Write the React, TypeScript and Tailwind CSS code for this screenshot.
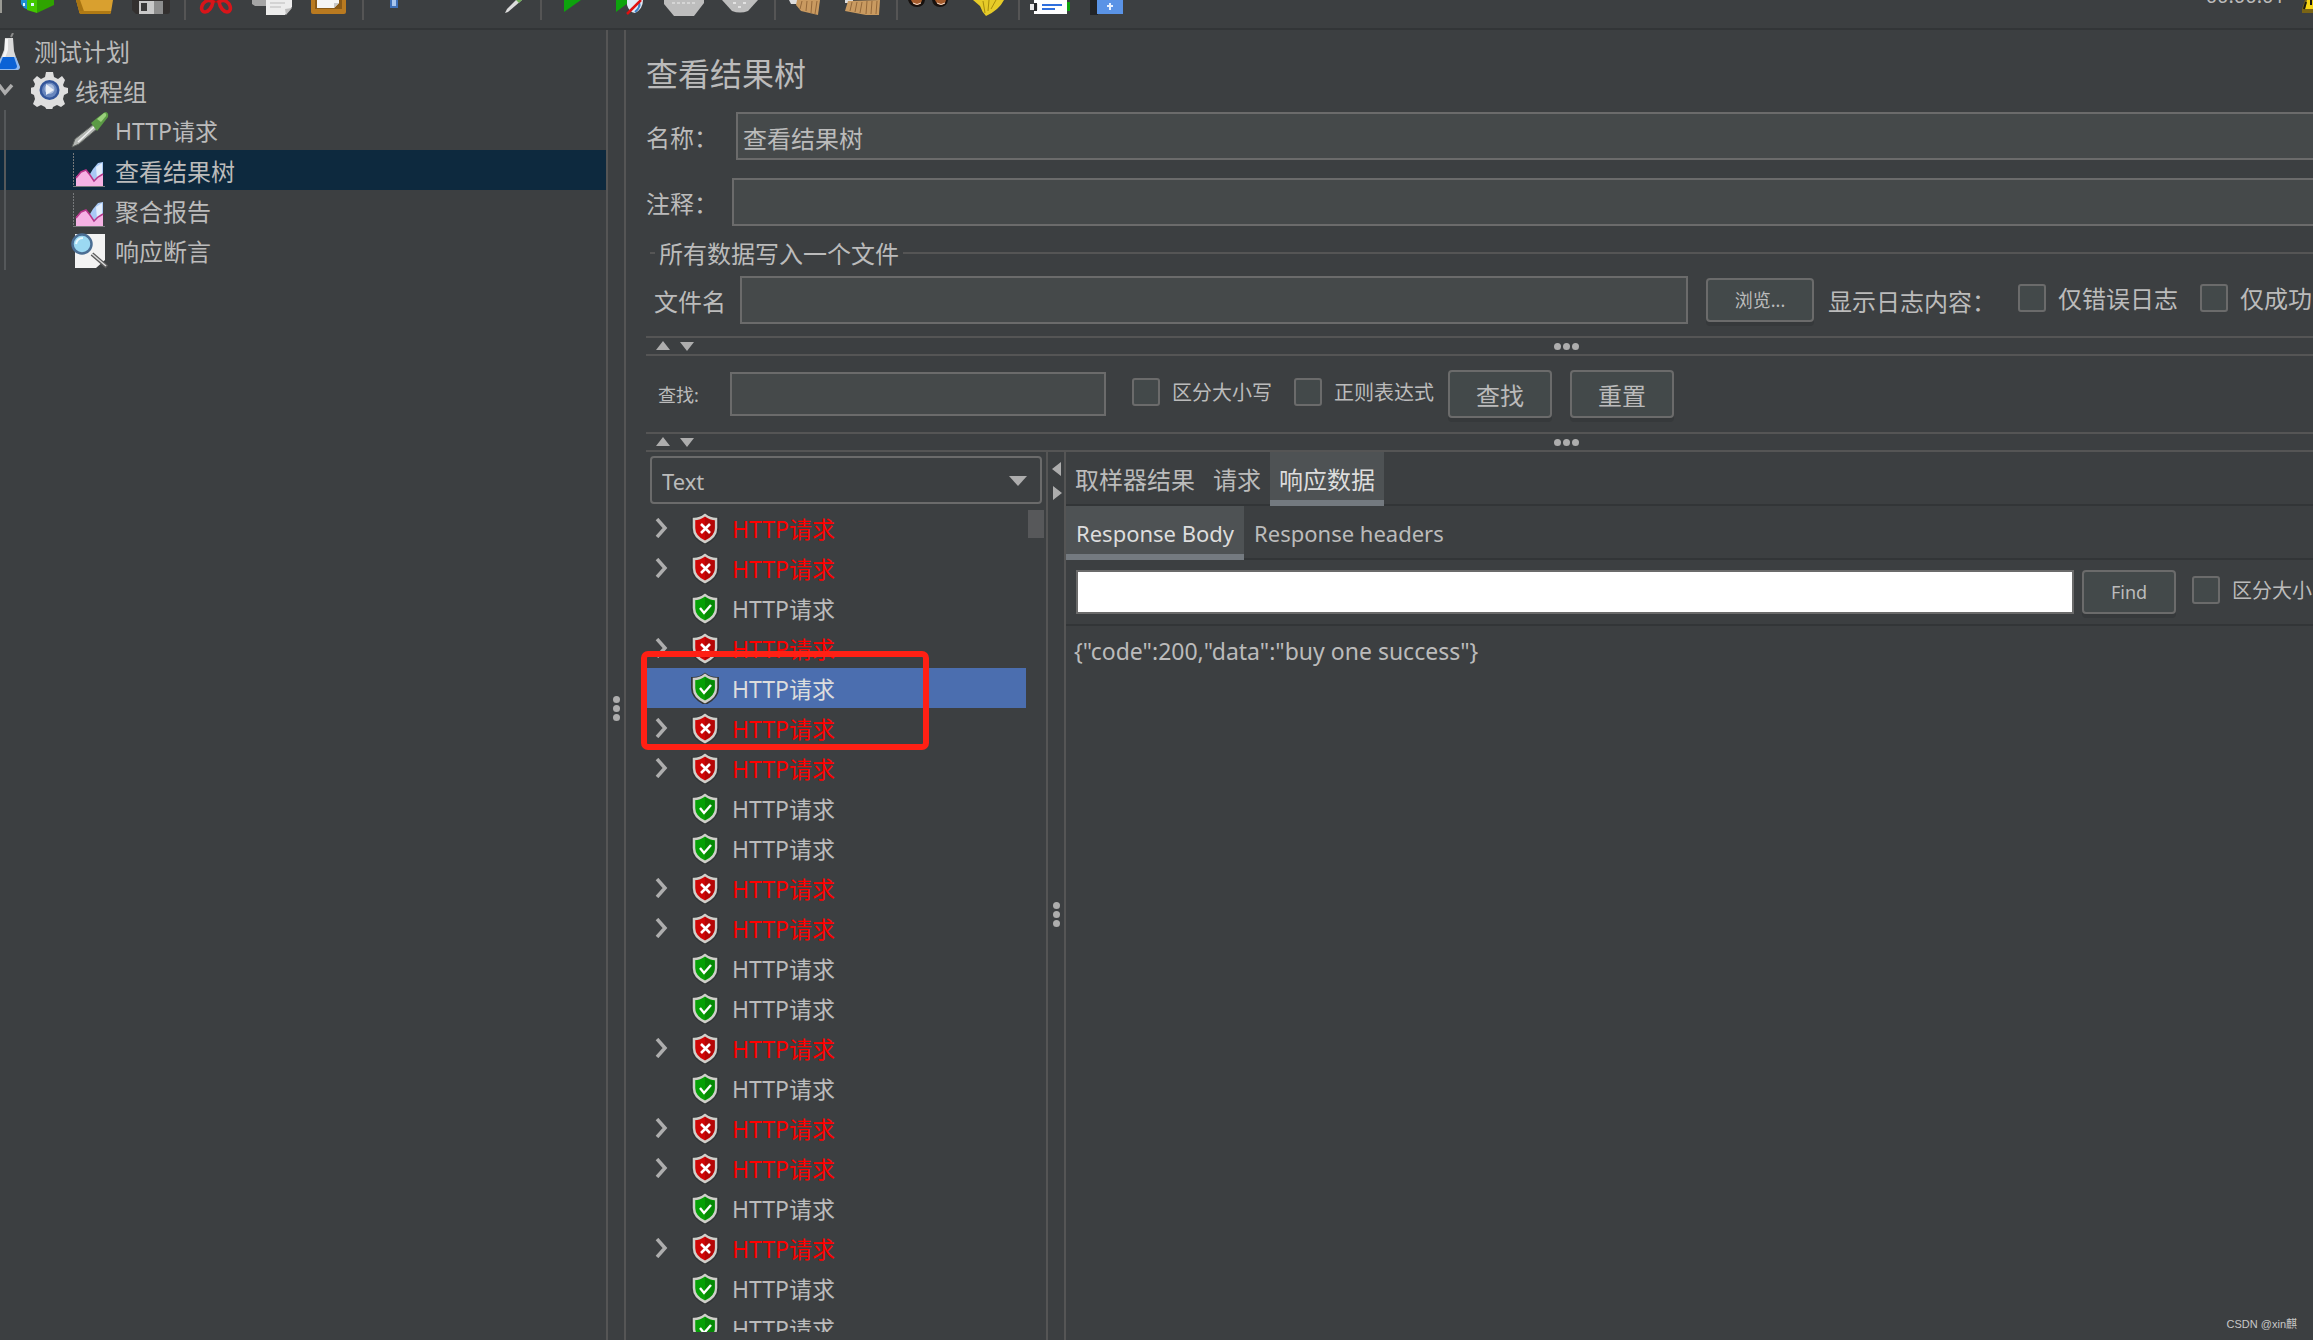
import type { ReactNode } from 'react';

const SAMPLES = [
  'fail', 'fail', 'ok', 'fail', 'ok', 'fail', 'fail', 'ok', 'ok', 'fail', 'fail',
  'ok', 'ok', 'fail', 'ok', 'fail', 'fail', 'ok', 'fail', 'ok', 'ok',
];

const SELECTED_SAMPLE = 4;

/* ---------- toolbar icons (only their lower half is visible) ---------- */

function ToolIcon({ label, children }: { label: string; children?: ReactNode }) {
  return (
    <button type="button" aria-label={label} className="w-14 h-5 flex justify-center shrink-0">
      <svg width="40" height="20" viewBox="0 0 40 20">
        {children}
      </svg>
    </button>
  );
}

function ToolSeparator() {
  return <span className="w-[2px] h-5 ml-[6px] mr-[2px] bg-[#555555] shrink-0" />;
}

function Toolbar() {
  return (
    <header className="h-[30px] shrink-0 flex items-start border-b-2 border-[#323537] overflow-hidden">
      <span className="w-[2px] h-[13px] mr-2 bg-[#9a9a94] shrink-0" />
      <ToolIcon label="模板">
        <path d="M3 0h8v10l-5-2-3-4z" fill="#1f8fd0" />
        <path d="M9 0h10v13L9 10z" fill="#43c800" />
        <path d="M19 0h17v5l-17 8z" fill="#2fa300" />
        <path d="M5 3h2v3H5zM13 3h3v3h-3z" fill="#d9f5ff" />
      </ToolIcon>
      <ToolIcon label="打开">
        <path d="M2 0h37l-2 12q0 2-3 2H8q-3 0-3-3z" fill="#d9a02f" />
        <path d="M2 0l3 11q0 3 3 3h3L6 0z" fill="#a87412" />
        <path d="M5 11h32v1q0 2-3 2H8q-3 0-3-3z" fill="#b07a14" />
      </ToolIcon>
      <ToolIcon label="保存">
        <path d="M2 0h38v11q0 3-3 3H6L2 10z" fill="#33302f" />
        <path d="M9 1h24v13H9z" fill="#c9c9c9" />
        <path d="M11 3h6v8h-6z" fill="#3a3a3a" />
        <path d="M24 1h9v13h-9z" fill="#8d8d8d" />
      </ToolIcon>
      <ToolSeparator />
      <ToolIcon label="剪切">
        <path d="M15 0l5 3 5-3h-3l-2 1-2-1z" fill="#b01010" />
        <path d="M15 1c-4-2-8 2-9 5s0 6 3 6 7-4 8-10zM25 1c4-2 8 2 9 5s0 6-3 6-7-4-8-10z" fill="none" stroke="#d8151a" strokeWidth="3.6" />
      </ToolIcon>
      <ToolIcon label="复制">
        <path d="M0 0h20v6H3L0 4z" fill="#a5a5a5" />
        <path d="M14 0h26v7l-7 8H14z" fill="#ececec" />
        <path d="M40 8l-6 7-1-6z" fill="#bdbdbd" />
        <path d="M18 3h15M18 7h11" stroke="#d3d3d3" strokeWidth="2" />
      </ToolIcon>
      <ToolIcon label="粘贴">
        <path d="M3 0h35v12q0 2-2 2H5q-2 0-2-2z" fill="#b97a20" />
        <path d="M7 0h27v9H7z" fill="#8a5a17" />
        <path d="M9 0h22v3l-5 5H9z" fill="#f5f5f5" />
        <path d="M31 3l-5 5v-5z" fill="#c8c8c8" />
      </ToolIcon>
      <ToolSeparator />
      <ToolIcon label="展开">
        <path d="M16 0h8v8h-8z" fill="#3f70b8" />
        <path d="M18 0h4v6h-4z" fill="#a9c6ee" />
      </ToolIcon>
      <ToolIcon label="折叠" />
      <ToolIcon label="切换">
        <path d="M30 0l6 0-14 12-3 1 2-4z" fill="#dcdcdc" />
        <path d="M30 0h6l-3 3z" fill="#6fae58" />
      </ToolIcon>
      <ToolSeparator />
      <ToolIcon label="启动">
        <path d="M12 0h17L12 12z" fill="#0da30d" />
      </ToolIcon>
      <ToolIcon label="不停顿开始">
        <path d="M8 0h16L8 12z" fill="#0da30d" />
        <path d="M19 0h16q0 9-8 13-6-1-8-8z" fill="#dfe9f5" />
        <path d="M31 2q2 5-4 10" stroke="#3c7fc4" strokeWidth="2" fill="none" />
        <path d="M33 0L19 14" stroke="#e01010" strokeWidth="2.5" />
      </ToolIcon>
      <ToolIcon label="停止">
        <path d="M0 0h40v3L30 16H10L0 4z" fill="#bdbdbd" />
        <path d="M8 3h24" stroke="#d5d5d5" strokeWidth="2" strokeDasharray="3 2" />
      </ToolIcon>
      <ToolIcon label="关闭">
        <path d="M2 0h36L28 11q-8 3-16 0z" fill="#bdbdbd" />
        <path d="M13 3h3M23 3h3M18 7h3" stroke="#e2e2e2" strokeWidth="2" />
      </ToolIcon>
      <ToolSeparator />
      <ToolIcon label="清除">
        <path d="M3 0h8v4H5z" fill="#dddddd" />
        <path d="M11 0h23l-2 15-17-4-5-6z" fill="#c99a60" />
        <path d="M16 1l-2 8M21 1l-1 10M26 1l-1 12M31 1l-2 13" stroke="#94683a" />
      </ToolIcon>
      <ToolIcon label="清除全部">
        <path d="M3 0h8v3H3z" fill="#dddddd" />
        <path d="M6 1l32-1-1 15-13 0-21-4z" fill="#c99a60" />
        <path d="M10 2l-2 9M15 2l-2 10M20 2l-2 11M25 1l-1 13M30 1l-1 13M35 1l-1 13" stroke="#94683a" />
      </ToolIcon>
      <ToolSeparator />
      <ToolIcon label="查找">
        <path d="M0 0h17q-1 7-8 7T0 0zM24 0h16q-1 7-8 7t-8-7z" fill="#17110e" />
        <path d="M3 0h11q-1 5-5 5T3 0zM27 0h11q-1 5-5 5t-6-5z" fill="#a35a2b" />
        <path d="M5 3q4 3 8 0M29 3q4 3 8 0" stroke="#f0d8c8" fill="none" />
      </ToolIcon>
      <ToolIcon label="重置查找">
        <path d="M9 0h31q-5 10-18 16-4-4-6-10z" fill="#e6cb28" />
        <path d="M19 1l2 12M25 0l-1 11M32 0l-5 9" stroke="#a88d0c" />
      </ToolIcon>
      <ToolSeparator />
      <ToolIcon label="函数助手">
        <path d="M32 2h8v9h-8z" fill="#0da30d" />
        <path d="M4 0h33v14H4z" fill="#ffffff" />
        <path d="M0 4h8v6H0z" fill="#e8e8e8" />
        <path d="M4 3h3v8H4z" fill="#26282a" />
        <path d="M12 5h20M12 9h13" stroke="#2f6fdd" strokeWidth="2" />
      </ToolIcon>
      <ToolIcon label="帮助">
        <path d="M4 0h8v15H4z" fill="#222428" />
        <path d="M11 0h26v14H11z" fill="#5a93e6" />
        <path d="M24 3v7M21 6h6" stroke="#e6f0ff" strokeWidth="2" />
      </ToolIcon>
      <time className="ml-auto -mt-5 h-8 leading-8 text-[20px]">00:00:01</time>
      <svg width="24" height="14" viewBox="0 0 24 14" className="ml-4 -mr-3 shrink-0">
        <path d="M4 0h20v13H1V9z" fill="#7a6414" />
        <path d="M6 0h18v9H4z" fill="#f5d416" />
        <path d="M5 2L3 9M10 0v5" stroke="#1c1a10" strokeWidth="2" />
      </svg>
    </header>
  );
}

/* ---------- test plan tree ---------- */

function FlaskIcon() {
  return (
    <svg width="20" height="38" viewBox="0 0 20 38">
      <path d="M11 4l2-4" stroke="#8b8b8b" strokeWidth="2" />
      <path d="M5 5h8l1 13 5 16q0 3-3 3H0V27l4-10z" fill="#dadada" />
      <path d="M5 6h3v11l-3 8H2l3-8z" fill="#f6f6f6" />
      <path d="M1 24h15l4 10q0 3-3 3H0v-9z" fill="#8fb9f0" />
      <path d="M3 24h11l3 9q0 3-3 3H0v-5z" fill="#0b62d6" />
    </svg>
  );
}

function GearIcon() {
  return (
    <svg width="37" height="38" viewBox="0 0 37 38">
      <path
        d="M15 1h7l1 5 4 2 4-3 3 4-2 5 1 2 4 1v5l-4 2-1 4 2 5-4 3-4-2-4 2-1 3h-5l-2-3-4-2-4 2-4-3 2-5-1-4-4-2v-5l4-1 1-3-2-4 4-4 4 3 4-2z"
        fill="#dedede"
      />
      <circle cx="18.5" cy="19" r="10" fill="#33559a" />
      <circle cx="18.5" cy="19" r="7.5" fill="#6886bd" />
      <circle cx="18.5" cy="18" r="5" fill="#a9bcdd" />
      <path d="M15 13l8 6-8 5z" fill="#e9eef7" />
    </svg>
  );
}

function PipetteIcon() {
  return (
    <svg width="38" height="38" viewBox="0 0 38 38">
      <path d="M23 13l4 4L8 33l-7 3 3-8z" fill="#b5b8b4" stroke="#5e625e" />
      <path d="M23 16L7 31" stroke="#f2f2f2" strokeWidth="1.5" />
      <path d="M20 12l6-5 8-6q4 0 3 5l-7 9-4 5z" fill="#5b9a45" />
      <path d="M26 8l7-6q3 0 2 3l-5 6z" fill="#9ad07c" />
    </svg>
  );
}

function ChartIcon() {
  return (
    <svg width="36" height="36" viewBox="0 0 36 36">
      <path d="M2.5 1v34" stroke="#77797b" strokeDasharray="2 1" />
      <path d="M2 34.5h32" stroke="#77797b" />
      <path d="M19 22l3-5 5-6 5-1v24H19z" fill="#a9c9f5" />
      <path d="M25 15l6-4v12l-5 4z" fill="#e2eefc" />
      <path d="M5 34v-9l5-5 5-2 4 5 4 7 5-5 4-3v12z" fill="#f5b2e4" />
      <path d="M5 26l5-6 5-2 4 5 4 6 4-4 5-3" stroke="#b8358a" strokeWidth="1.5" fill="none" />
    </svg>
  );
}

function AssertionIcon() {
  return (
    <svg width="37" height="37" viewBox="0 0 37 37">
      <path d="M4 2h30v26l-9 8H4z" fill="#f3f3f3" />
      <path d="M21 22l15 13" stroke="#5b5b5b" strokeWidth="4" />
      <path d="M21 22l14 12" stroke="#dcdcdc" strokeWidth="1.5" />
      <circle cx="11" cy="12" r="9.5" fill="#9bd9f2" stroke="#4a6e94" strokeWidth="2.5" />
      <path d="M5 12q1-6 7-6" stroke="#e6f8ff" strokeWidth="2" fill="none" />
    </svg>
  );
}

const PLAN_CHILDREN = [
  { label: 'HTTP请求', icon: <PipetteIcon />, selected: false },
  { label: '查看结果树', icon: <ChartIcon />, selected: true },
  { label: '聚合报告', icon: <ChartIcon />, selected: false },
  { label: '响应断言', icon: <AssertionIcon />, selected: false },
];

function PlanTree() {
  return (
    <aside className="w-[606px] shrink-0">
      <ul>
        <li>
          <div className="h-10 flex items-center text-[24px]">
            <span className="w-[34px] pt-1">
              <FlaskIcon />
            </span>
            <span className="pt-1">测试计划</span>
          </div>
        </li>
        <li>
          <div className="h-10 flex items-center text-[24px]">
            <svg width="14" height="12" viewBox="0 0 14 12" className="mr-[17px]">
              <path d="M-1 1l6 8 7-8" stroke="#adadad" strokeWidth="3.5" fill="none" />
            </svg>
            <GearIcon />
            <span className="pl-[7px] pt-1">线程组</span>
          </div>
          <ul className="relative">
            {PLAN_CHILDREN.map((node) => (
              <li
                key={node.label}
                className={`h-10 flex items-center pl-[71px] ${node.selected ? 'bg-[#0d293e]' : ''}`}
              >
                <span className="w-11">{node.icon}</span>
                <span className={node.label.startsWith('HTTP') ? 'pt-[2px] text-[23px]' : 'pt-1 text-[24px]'}>
                  {node.label}
                </span>
              </li>
            ))}
            <span className="absolute left-1 top-0 bottom-0 w-[2px] bg-[#55585a]" />
          </ul>
        </li>
      </ul>
    </aside>
  );
}

/* ---------- shared controls ---------- */

function Dots({ vertical = false }: { vertical?: boolean }) {
  return (
    <span className={`flex gap-[2px] ${vertical ? 'flex-col' : ''}`}>
      <i className="size-[7px] rounded-full bg-[#adadad]" />
      <i className="size-[7px] rounded-full bg-[#adadad]" />
      <i className="size-[7px] rounded-full bg-[#adadad]" />
    </span>
  );
}

function RowDivider() {
  return (
    <div className="h-5 shrink-0 border-y-2 border-[#555555] flex items-center pl-[10px]">
      <svg width="38" height="10" viewBox="0 0 38 10">
        <path d="M0 9l7-9 7 9zM24 1h14l-7 9z" fill="#adadad" />
      </svg>
      <span className="pl-[860px]">
        <Dots />
      </span>
    </div>
  );
}

function Checkbox({ id, label, small = false }: { id: string; label: string; small?: boolean }) {
  return (
    <span className="flex items-center shrink-0 mb-1">
      <input
        id={id}
        type="checkbox"
        className="appearance-none size-7 shrink-0 border-2 border-[#6b6b6b] rounded-[3px] bg-[#43494a]"
      />
      <label htmlFor={id} className={`whitespace-nowrap pt-[2px] ${small ? 'pl-3 text-[20px]' : 'pl-3 text-[24px]'}`}>
        {label}
      </label>
    </span>
  );
}

function Button({ className, children }: { className: string; children: ReactNode }) {
  return (
    <button
      type="button"
      className={`shrink-0 border-2 border-[#6b6b6b] rounded-[4px] bg-[#43494a] shadow-[0_4px_0_#36393b] ${className}`}
    >
      {children}
    </button>
  );
}

/* ---------- results ---------- */

function Shield({ ok }: { ok: boolean }) {
  return (
    <svg width="28" height="32" viewBox="0 0 28 32">
      <path
        d="M14 3q5 4 12 4v9q0 9-12 15Q2 25 2 16V7q7 0 12-4z"
        fill="#2b2d2e"
        stroke="#333638"
        strokeWidth="4"
      />
      <path
        d="M14 3q5 4 11 4v9q0 9-11 14Q3 25 3 16V7q6 0 11-4z"
        fill={ok ? '#06a006' : '#d00606'}
        stroke="#cfcfca"
        strokeWidth="2.5"
      />
      <path d="M14 5q5 4 10 4v7q0 7-10 12z" fill={ok ? '#067806' : '#9c0808'} opacity="0.55" />
      {ok ? (
        <path d="M9 16l4 5 7-8" stroke="#ffffff" strokeWidth="2.4" fill="none" />
      ) : (
        <path d="M10 12l9 9M19 12l-9 9" stroke="#ffffff" strokeWidth="2.6" />
      )}
    </svg>
  );
}

function SampleRow({ ok, selected }: { ok: boolean; selected: boolean }) {
  const color = selected ? 'bg-[#4b6eaf] text-[#dddddd]' : ok ? '' : 'text-[#ff0000]';
  return (
    <li className={`h-10 shrink-0 flex items-center pl-[9px] text-[23px] ${color}`}>
      <span className="w-9">
        {!ok && (
          <svg width="13" height="20" viewBox="0 0 13 20">
            <path d="M2 1l8 9-8 9" stroke="#adadad" strokeWidth="3.5" fill="none" />
          </svg>
        )}
      </span>
      <Shield ok={ok} />
      <span className="pl-[13px] pt-[2px]">HTTP请求</span>
    </li>
  );
}

function SampleList() {
  return (
    <div className="w-[400px] shrink-0 flex flex-col min-h-0 pb-2">
      <div className="relative ml-1 mr-1 mt-1">
        <select
          aria-label="Renderer"
          className="appearance-none w-full h-12 pl-[10px] pt-[1px] border-2 border-[#6b6b6b] rounded-[4px] bg-[#3c3f41] text-[22px]"
        >
          <option>Text</option>
        </select>
        <svg width="20" height="12" viewBox="0 0 20 12" className="absolute right-[14px] top-[19px] pointer-events-none">
          <path d="M1 1h18l-9 10z" fill="#adadad" />
        </svg>
      </div>
      <div className="relative mt-1 flex-1 min-h-0">
        <div className="h-full flex overflow-hidden">
          <ul className="flex-1 flex flex-col">
            {SAMPLES.map((state, i) => (
              <SampleRow key={i} ok={state === 'ok'} selected={i === SELECTED_SAMPLE} />
            ))}
          </ul>
          <div className="w-5 pl-[2px] pr-[2px] pt-[2px]">
            <div className="h-7 bg-[#57585a]" />
          </div>
        </div>
        <div className="absolute -left-[5px] top-[143px] w-[288px] h-[99px] border-[6px] border-[#ff2014] rounded-[7px]" />
      </div>
    </div>
  );
}

function Tab({ active = false, className, children }: { active?: boolean; className: string; children: ReactNode }) {
  return (
    <button
      type="button"
      role="tab"
      aria-selected={active}
      className={`h-[54px] border-b-[6px] ${
        active ? 'bg-[#4e5254] border-[#747a80] text-[#dddddd]' : 'border-transparent'
      } ${className}`}
    >
      {children}
    </button>
  );
}

function ResponsePanel() {
  return (
    <section className="flex-1 min-w-0">
      <div role="tablist" className="flex shadow-[inset_0_-2px_0_#323537]">
        <Tab className="px-[9px] pt-2 text-[24px]">取样器结果</Tab>
        <Tab className="px-[9px] pt-2 text-[24px]">请求</Tab>
        <Tab active className="px-[9px] pt-2 text-[24px]">响应数据</Tab>
      </div>
      <div role="tablist" className="flex shadow-[inset_0_-2px_0_#323537]">
        <Tab active className="px-[10px] pt-[6px] text-[22px]">Response Body</Tab>
        <Tab className="px-[10px] pt-[6px] text-[22px]">Response headers</Tab>
      </div>
      <div className="h-[66px] pl-[10px] flex items-center border-b-2 border-[#323537]">
        <input aria-label="Find text" className="flex-1 min-w-0 h-11 bg-white border-2 border-[#6b6b6b] text-black px-2" />
        <Button className="ml-2 w-[94px] h-11 text-[18px]">Find</Button>
        <span className="w-[121px] ml-4 overflow-hidden">
          <Checkbox id="body-case" label="区分大小写" small />
        </span>
      </div>
      <pre className="pl-2 pt-[9px] text-[23px] leading-8 font-[inherit]">{'{"code":200,"data":"buy one success"}'}</pre>
    </section>
  );
}

export default function App() {
  return (
    <div className="relative h-screen flex flex-col overflow-hidden bg-[#3c3f41] text-[#bbbbbb] leading-none font-['Noto_Sans','Noto_Sans_CJK_SC',sans-serif]">
      <Toolbar />
      <div className="flex-1 min-h-0 flex">
        <PlanTree />
        <div className="w-5 shrink-0 border-x-2 border-[#555555] flex items-center justify-center pt-[46px]">
          <Dots vertical />
        </div>

        <main className="flex-1 min-w-0 pl-5 flex flex-col">
          <h1 className="mt-6 h-10 leading-10 text-[32px]">查看结果树</h1>
          <div className="mt-[18px] flex items-center">
            <label htmlFor="name" className="w-[90px] pt-1 text-[24px]">名称：</label>
            <input
              id="name"
              defaultValue="查看结果树"
              className="flex-1 min-w-0 h-12 pl-[5px] pt-[2px] border-2 border-r-0 border-[#6b6b6b] bg-[#45494a] text-[24px]"
            />
          </div>
          <div className="mt-[18px] flex items-center">
            <label htmlFor="comment" className="w-[86px] pt-1 text-[24px]">注释：</label>
            <input
              id="comment"
              className="flex-1 min-w-0 h-12 pl-[5px] border-2 border-r-0 border-[#6b6b6b] bg-[#45494a] text-[24px]"
            />
          </div>

          <fieldset className="mt-3 ml-1 min-w-0 border-t-2 border-[#555555]">
            <legend className="ml-[5px] px-1 h-[30px] leading-8 text-[24px]">所有数据写入一个文件</legend>
            <div className="pl-1 pt-2 pb-3 flex items-center overflow-hidden">
              <label htmlFor="file" className="w-[86px] shrink-0 pt-1 text-[24px]">文件名</label>
              <input
                id="file"
                className="flex-1 min-w-0 h-12 px-[5px] border-2 border-[#6b6b6b] bg-[#45494a] text-[24px]"
              />
              <Button className="ml-[18px] w-[108px] h-11 text-[18px]">浏览...</Button>
              <span className="w-[190px] ml-[14px] pt-1 shrink-0 text-[24px]">显示日志内容：</span>
              <Checkbox id="errors" label="仅错误日志" />
              <span className="w-[113px] ml-[22px] shrink-0 overflow-hidden">
                <Checkbox id="successes" label="仅成功日志" />
              </span>
            </div>
          </fieldset>

          <RowDivider />
          <div className="h-[76px] shrink-0 flex items-center pl-3">
            <label htmlFor="search" className="w-[72px] pt-[2px] text-[18px]">查找:</label>
            <input
              id="search"
              className="w-[376px] h-11 mr-[26px] px-[5px] border-2 border-[#6b6b6b] bg-[#45494a] text-[18px]"
            />
            <Checkbox id="case" label="区分大小写" small />
            <span className="w-[22px]" />
            <Checkbox id="regex" label="正则表达式" small />
            <Button className="ml-[14px] w-[104px] h-12 pt-1 text-[24px]">查找</Button>
            <Button className="ml-[18px] w-[104px] h-12 pt-1 text-[24px]">重置</Button>
          </div>
          <RowDivider />

          <div className="flex-1 min-h-0 flex">
            <SampleList />
            <div className="relative w-5 shrink-0 border-x-2 border-[#555555] flex items-center justify-center pt-[36px]">
              <svg width="10" height="38" viewBox="0 0 10 38" className="absolute left-1 top-[10px]">
                <path d="M9 0v14L0 7zM1 24v14l9-7z" fill="#adadad" />
              </svg>
              <Dots vertical />
            </div>
            <ResponsePanel />
          </div>
        </main>
      </div>
      <small className="absolute right-[16px] bottom-2 text-[11px] leading-4 text-[#c8c8c8] font-['Liberation_Sans','Noto_Sans_CJK_SC',sans-serif]">
        CSDN @xin麒
      </small>
    </div>
  );
}
